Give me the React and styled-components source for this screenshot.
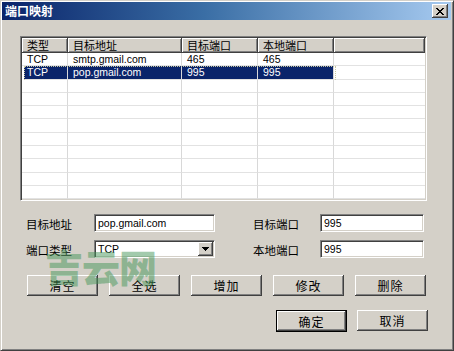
import React from "react";
import styled, { createGlobalStyle } from "styled-components";

const GlobalStyle = createGlobalStyle`
  html, body { margin: 0; padding: 0; background: #d4d0c8; }
  body { font-family: "Liberation Sans", "Noto Sans CJK SC", sans-serif; }
  * { box-sizing: border-box; }
`;

const CJK = `"Noto Sans CJK SC", "Liberation Sans", sans-serif`;
const LATIN = `"Liberation Sans", "Noto Sans CJK SC", sans-serif`;

const Window = styled.div`
  position: relative;
  width: 454px;
  height: 351px;
  background: #d4d0c8;
  border: 1px solid;
  border-color: #d4d0c8 #404040 #404040 #d4d0c8;
  box-shadow: inset 1px 1px #ffffff, inset -1px -1px #808080;
  padding: 1px 2px 2px 1px;
  display: flex;
  flex-direction: column;
  overflow: hidden;
`;

const TitleBar = styled.div`
  height: 18px;
  display: flex;
  align-items: center;
  justify-content: space-between;
  padding: 0 3px 0 3px;
  background: linear-gradient(to right, #0a246a 0%, #3a6ea5 45%, #a6caf0 100%);
`;

const Title = styled.span`
  font-family: ${CJK};
  font-weight: 700;
  font-size: 12px;
  color: #ffffff;
  line-height: 18px;
`;

const CloseButton = styled.div`
  width: 16px;
  height: 14px;
  background: #d4d0c8;
  display: flex;
  align-items: center;
  justify-content: center;
  box-shadow: inset -1px -1px #404040, inset 1px 1px #ffffff,
    inset -2px -2px #808080, inset 2px 2px #d4d0c8;
`;

const Content = styled.div`
  padding: 16px 0 0 18px;
  width: 426px;
  display: flex;
  flex-direction: column;
`;

const ListView = styled.div`
  width: 407px;
  height: 165px;
  background: #ffffff;
  border: 1px solid;
  border-color: #808080 #ffffff #ffffff #808080;
  box-shadow: inset 1px 1px #404040, inset -1px -1px #d4d0c8;
  padding: 1px;
  overflow: hidden;
`;

const COLS = "46px 114px 76px 76px 1fr";

const HeaderRow = styled.div`
  display: grid;
  grid-template-columns: ${COLS};
  height: 15px;
`;

const HeaderCell = styled.div`
  background: #d4d0c8;
  font-family: ${CJK};
  font-size: 11px;
  line-height: 15px;
  color: #000;
  padding-left: 5px;
  white-space: nowrap;
  box-shadow: inset -1px -1px #404040, inset 1px 1px #ffffff,
    inset -2px -2px #808080;
`;

const Row = styled.div`
  position: relative;
  display: grid;
  grid-template-columns: ${COLS};
  height: 13.3px;

  ${(p) =>
    p.$selected &&
    `
    &::after {
      content: "";
      position: absolute;
      left: 2px;
      top: 0;
      width: 310px;
      height: 100%;
      border: 1px dotted #c8c8a0;
      pointer-events: none;
    }
  `}
`;

const Cell = styled.div`
  font-family: ${LATIN};
  font-size: 10.5px;
  line-height: 13px;
  padding-left: 5px;
  white-space: nowrap;
  overflow: hidden;
  border-right: 1px solid #d8d8d8;
  border-bottom: 1px solid #e2e2e2;
  color: ${(p) => (p.$sel ? "#ffffff" : "#000000")};
  background: ${(p) => (p.$sel ? "#0a246a" : "#ffffff")};
  ${(p) => p.$sel && p.$first && "margin-left: 2px; padding-left: 3px;"}
  ${(p) => p.$last && "border-right: none;"}
`;

const Form = styled.div`
  margin-top: 13px;
  padding-left: 6px;
  display: grid;
  grid-template-columns: 68px 121px 38px 67px 104px;
  grid-auto-rows: 18px;
  row-gap: 8px;
  align-items: center;
`;

const Label = styled.span`
  font-family: ${CJK};
  font-size: 11.5px;
  color: #000;
  line-height: 18px;
  margin-top: 1px;
`;

const Spacer = styled.span``;

const TextBox = styled.div`
  height: 18px;
  background: #ffffff;
  border: 1px solid;
  border-color: #808080 #ffffff #ffffff #808080;
  box-shadow: inset 1px 1px #404040, inset -1px -1px #d4d0c8;
  font-family: ${LATIN};
  font-size: 10.5px;
  line-height: 16px;
  padding-left: 3px;
  color: #000;
  display: flex;
  align-items: center;
  justify-content: space-between;
`;

const DropButton = styled.div`
  width: 15px;
  height: 14px;
  margin-right: 1px;
  background: #d4d0c8;
  display: flex;
  align-items: center;
  justify-content: center;
  box-shadow: inset -1px -1px #404040, inset 1px 1px #ffffff,
    inset -2px -2px #808080, inset 2px 2px #d4d0c8;
`;

const ButtonRow = styled.div`
  margin-top: 17px;
  display: flex;
  gap: 11px;
  padding-left: 7px;
  justify-content: ${(p) => (p.$right ? "flex-end" : "flex-start")};
  ${(p) => p.$right && "margin-top: 14px; gap: 10px;"}
`;

const Button = styled.div`
  width: 71px;
  height: ${(p) => (p.$default ? "22px" : "21px")};
  background: #d4d0c8;
  display: flex;
  align-items: center;
  justify-content: center;
  font-family: ${CJK};
  font-size: 12px;
  letter-spacing: 1px;
  color: #000;
  ${(p) =>
    p.$default
      ? `border: 1px solid #000;
         box-shadow: inset -1px -1px #404040, inset 1px 1px #ffffff, inset -2px -2px #808080;`
      : `box-shadow: inset -1px -1px #404040, inset 1px 1px #ffffff, inset -2px -2px #808080, inset 2px 2px #d4d0c8;`}
`;

const Watermark = styled.div`
  position: absolute;
  left: 44px;
  top: 246px;
  font-family: ${CJK};
  font-weight: 900;
  font-size: 38px;
  letter-spacing: -1px;
  color: rgba(70, 150, 90, 0.5);
  pointer-events: none;
  line-height: 1;
`;

const CloseIcon = () => (
  <svg width="8" height="7" viewBox="0 0 8 7" shapeRendering="crispEdges">
    <path
      fill="#000"
      d="M0 0h2v1H0zM6 0h2v1H6zM1 1h2v1H1zM5 1h2v1H5zM2 2h4v1H2zM3 3h2v1H3zM2 4h4v1H2zM1 5h2v1H1zM5 5h2v1H5zM0 6h2v1H0zM6 6h2v1H6z"
    />
  </svg>
);

const ArrowDown = () => (
  <svg width="7" height="4" viewBox="0 0 7 4" shapeRendering="crispEdges">
    <path fill="#000" d="M0 0h7v1H0zM1 1h5v1H1zM2 2h3v1H2zM3 3h1v1H3z" />
  </svg>
);

const headers = ["类型", "目标地址", "目标端口", "本地端口", ""];
const data = [
  ["TCP", "smtp.gmail.com", "465", "465"],
  ["TCP", "pop.gmail.com", "995", "995"],
];
const ROWS = 11;

export default function App() {
  const rows = [];
  for (let i = 0; i < ROWS; i++) rows.push(data[i] || ["", "", "", ""]);
  return (
    <>
      <GlobalStyle />
      <Window>
        <TitleBar>
          <Title>端口映射</Title>
          <CloseButton>
            <CloseIcon />
          </CloseButton>
        </TitleBar>
        <Content>
          <ListView>
            <HeaderRow>
              {headers.map((h, i) => (
                <HeaderCell key={i}>{h}</HeaderCell>
              ))}
            </HeaderRow>
            {rows.map((r, i) => {
              const sel = i === 1;
              return (
                <Row key={i} $selected={sel}>
                  {r.map((c, j) => (
                    <Cell key={j} $sel={sel} $first={j === 0}>
                      {c}
                    </Cell>
                  ))}
                  <Cell $last />
                </Row>
              );
            })}
          </ListView>

          <Form>
            <Label>目标地址</Label>
            <TextBox>pop.gmail.com</TextBox>
            <Spacer />
            <Label>目标端口</Label>
            <TextBox>995</TextBox>

            <Label>端口类型</Label>
            <TextBox>
              TCP
              <DropButton>
                <ArrowDown />
              </DropButton>
            </TextBox>
            <Spacer />
            <Label>本地端口</Label>
            <TextBox>995</TextBox>
          </Form>

          <ButtonRow>
            <Button>清空</Button>
            <Button>全选</Button>
            <Button>增加</Button>
            <Button>修改</Button>
            <Button>删除</Button>
          </ButtonRow>
          <ButtonRow $right>
            <Button $default>确定</Button>
            <Button>取消</Button>
          </ButtonRow>
        </Content>
        <Watermark>吉云网</Watermark>
      </Window>
    </>
  );
}
